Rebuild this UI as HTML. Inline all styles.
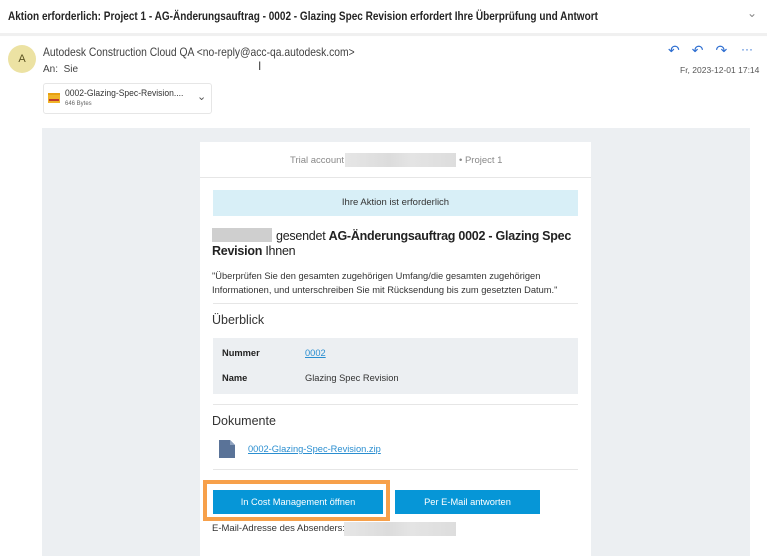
<!DOCTYPE html><html><head><meta charset="utf-8"><style>
*{margin:0;padding:0;box-sizing:border-box}
body{width:767px;height:556px;overflow:hidden;background:#fff;font-family:"Liberation Sans",sans-serif;position:relative;color:#242424}
.a{position:absolute;white-space:nowrap}
.blur{background:linear-gradient(90deg,#e6e6e6,#dcdcdc 40%,#e4e4e4 60%,#ddd);}
.sx{transform-origin:0 0}
</style></head><body>
<div class="a" style="left:0;top:0;width:767px;height:33px;background:#fff;box-shadow:0 1px 3px rgba(0,0,0,.15)"></div>
<div class="a" style="left:0;top:33px;width:767px;height:3px;background:#f0f0f0"></div>
<div class="a sx" style="left:8px;top:9px;font-size:12px;font-weight:bold;color:#242424;transform:scaleX(0.835)">Aktion erforderlich: Project 1 - AG-Änderungsauftrag - 0002 - Glazing Spec Revision erfordert Ihre Überprüfung und Antwort</div>
<div class="a" style="left:747px;top:6px;font-size:12px;color:#888">⌄</div>
<div class="a" style="left:8px;top:45px;width:28px;height:28px;border-radius:50%;background:#ece2a3;color:#5a5220;font-size:11px;text-align:center;line-height:28px">A</div>
<div class="a sx" style="left:43px;top:45px;font-size:12px;color:#424242;transform:scaleX(0.86)">Autodesk Construction Cloud QA &lt;no-reply@acc-qa.autodesk.com&gt;</div>
<div class="a" style="left:258px;top:59px;font-size:12px;color:#444">I</div>
<div class="a" style="left:43px;top:64px;font-size:10px;color:#424242">An:&nbsp; Sie</div>
<div class="a" style="left:668px;top:42px;font-size:14px;color:#2f6fd1;letter-spacing:12px">↶↶↷</div>
<div class="a" style="left:741px;top:42px;font-size:12px;color:#2f6fd1">···</div>
<div class="a" style="left:680px;top:65px;font-size:8.5px;color:#555">Fr, 2023-12-01 17:14</div>
<div class="a" style="left:43px;top:83px;width:169px;height:31px;border:1px solid #e6e6e6;border-radius:3px"></div>
<div class="a" style="left:48px;top:93px;width:12px;height:10px;background:#f0b429;border-top:2px solid #e8a010"></div>
<div class="a" style="left:49px;top:99px;width:10px;height:2px;background:#c0392b"></div>
<div class="a sx" style="left:65px;top:88px;font-size:9.5px;color:#333;transform:scaleX(0.9)">0002-Glazing-Spec-Revision....</div>
<div class="a" style="left:65px;top:101px;font-size:6px;color:#666">646 Bytes</div>
<div class="a" style="left:197px;top:90px;font-size:11px;color:#555">⌄</div>
<div class="a" style="left:42px;top:128px;width:708px;height:428px;background:#eceff2"></div>
<div class="a" style="left:200px;top:142px;width:391px;height:414px;background:#fff"></div>
<div class="a" style="left:200px;top:177px;width:391px;height:1px;background:#e6e6e6"></div>
<div class="a" style="left:290px;top:155px;font-size:9.5px;color:#888">Trial account</div>
<div class="a blur" style="left:345px;top:153px;width:111px;height:14px"></div>
<div class="a" style="left:459px;top:155px;font-size:9.5px;color:#888">• Project 1</div>
<div class="a" style="left:213px;top:190px;width:365px;height:26px;background:#d8eff7;text-align:center;font-size:9.5px;line-height:26px;color:#333">Ihre Aktion ist erforderlich</div>
<div class="a blur" style="left:212px;top:228px;width:60px;height:14px;background:#cfcfcf"></div>
<div class="a" style="left:212px;top:229px;font-size:12.5px;line-height:15px;white-space:normal;width:380px;letter-spacing:-0.25px;color:#222"><span style="display:inline-block;width:64px"></span>gesendet <b>AG-Änderungsauftrag 0002 - Glazing Spec Revision</b> Ihnen</div>
<div class="a" style="left:212px;top:269px;font-size:9.3px;line-height:14px;white-space:normal;width:370px;color:#333">"Überprüfen Sie den gesamten zugehörigen Umfang/die gesamten zugehörigen Informationen, und unterschreiben Sie mit Rücksendung bis zum gesetzten Datum."</div>
<div class="a" style="left:213px;top:303px;width:365px;height:1px;background:#e6e6e6"></div>
<div class="a" style="left:212px;top:313px;font-size:12.5px;color:#333">Überblick</div>
<div class="a" style="left:213px;top:338px;width:365px;height:56px;background:#eceff2"></div>
<div class="a" style="left:222px;top:348px;font-size:9.3px;font-weight:bold;color:#222">Nummer</div>
<div class="a" style="left:305px;top:348px;font-size:9.3px;color:#2a8ed0;text-decoration:underline">0002</div>
<div class="a" style="left:222px;top:373px;font-size:9.3px;font-weight:bold;color:#222">Name</div>
<div class="a" style="left:305px;top:373px;font-size:9.3px;color:#333">Glazing Spec Revision</div>
<div class="a" style="left:213px;top:404px;width:365px;height:1px;background:#e6e6e6"></div>
<div class="a" style="left:212px;top:414px;font-size:12.5px;color:#333">Dokumente</div>
<svg class="a" style="left:219px;top:440px" width="17" height="18"><path d="M0 0H11L16 5V18H0Z" fill="#5a7398"/><path d="M11 0V5H16" fill="#8ea2bf"/></svg>
<div class="a" style="left:248px;top:444px;font-size:9.3px;color:#2a8ed0;text-decoration:underline">0002-Glazing-Spec-Revision.zip</div>
<div class="a" style="left:213px;top:469px;width:365px;height:1px;background:#e6e6e6"></div>
<div class="a" style="left:203px;top:480px;width:187px;height:41px;border:4px solid #f7a04a"></div>
<div class="a" style="left:213px;top:490px;width:170px;height:24px;background:#0696d7;color:#fff;font-size:9.3px;text-align:center;line-height:24px">In Cost Management öffnen</div>
<div class="a" style="left:395px;top:490px;width:145px;height:24px;background:#0696d7;color:#fff;font-size:9.3px;text-align:center;line-height:24px">Per E-Mail antworten</div>
<div class="a" style="left:212px;top:523px;font-size:9.5px;color:#333">E-Mail-Adresse des Absenders:</div>
<div class="a blur" style="left:344px;top:522px;width:112px;height:14px"></div>
</body></html>
